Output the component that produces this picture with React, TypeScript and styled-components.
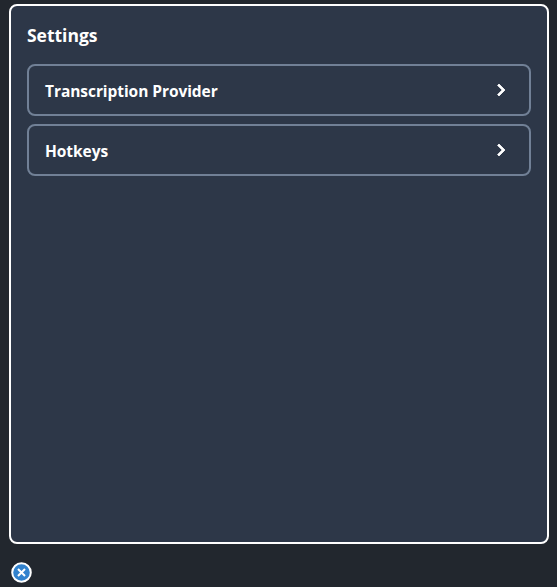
import React from "react";
import styled, { createGlobalStyle } from "styled-components";

const GlobalStyle = createGlobalStyle`
  * { box-sizing: border-box; }
  body { margin: 0; background: #22272e; overflow: hidden; font-family: "Open Sans", "Noto Sans", sans-serif; }
`;

const Page = styled.main`
  height: 587px;
  padding: 4px 8px 0 9px;
  display: flex;
  flex-direction: column;
  align-items: flex-start;
  gap: 18px;
`;

const Panel = styled.section`
  width: 100%;
  height: 540px;
  padding: 16px;
  display: flex;
  flex-direction: column;
  gap: 8px;
  background: #2d3748;
  border: 2px solid #ffffff;
  border-radius: 8px;
`;

const Title = styled.h1`
  margin: 0 0 8px;
  height: 26px;
  line-height: 27px;
  font-size: 17.5px;
  font-weight: 700;
  letter-spacing: -0.02px;
  color: #ffffff;
`;

const SettingRow = styled.button`
  height: 52px;
  padding: 0 16px;
  display: flex;
  align-items: center;
  justify-content: space-between;
  background: transparent;
  border: 2px solid #718096;
  border-radius: 8px;
  color: #ffffff;
  font: 700 15.5px/24px "Open Sans", "Noto Sans", sans-serif;
  letter-spacing: -0.06px;
`;

const RowLabel = styled.span`
  padding-top: 2px;
`;

const RowIcon = styled.svg`
  width: 24px;
  height: 24px;
  margin-bottom: 1px;
  fill: #ffffff;
  stroke: #ffffff;
  stroke-width: 0.8;
`;

const CloseButton = styled.button`
  width: 21px;
  height: 21px;
  margin-left: 2px;
  padding: 0;
  border: 0;
  background: none;
  display: flex;
`;

const Chevron = () => (
  <RowIcon viewBox="0 0 24 24">
    <path d="M10 6 8.59 7.41 13.17 12l-4.58 4.59L10 18l6-6z" />
  </RowIcon>
);

const sections = ["Transcription Provider", "Hotkeys"];

export default function App() {
  return (
    <Page>
      <GlobalStyle />
      <Panel>
        <Title>Settings</Title>
        {sections.map((name) => (
          <SettingRow key={name}>
            <RowLabel>{name}</RowLabel>
            <Chevron />
          </SettingRow>
        ))}
      </Panel>
      <CloseButton aria-label="Close">
        <svg width="21" height="21" viewBox="0 0 21 21">
          <circle cx="10.5" cy="10.5" r="9.3" fill="#3182ce" stroke="#fff" strokeWidth="2" />
          <path d="m7 7 7 7m0-7-7 7" stroke="#fff" strokeWidth="2" />
        </svg>
      </CloseButton>
    </Page>
  );
}
